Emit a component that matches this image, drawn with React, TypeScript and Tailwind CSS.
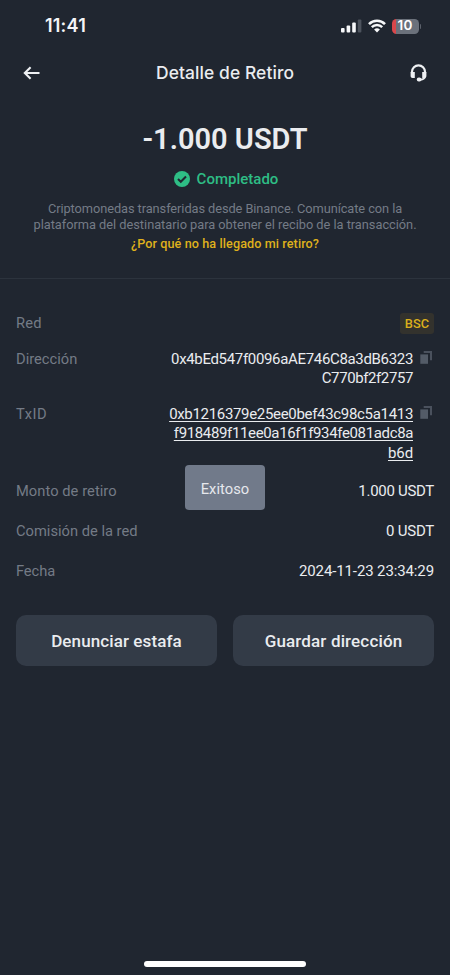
import type { ReactNode } from "react";

function StatusBar() {
  return (
    <div className="flex h-[52px] items-center justify-between pl-[45px] pr-[29px] font-['Inter',sans-serif]">
      <span className="text-[18px] font-semibold leading-5 tracking-[0.2px] text-[#f4f5f7]">11:41</span>
      <div className="flex items-center">
        <svg width="21" height="14" viewBox="0 0 21 14" className="mr-[6px]">
          <rect x="0" y="9" width="3.6" height="4.4" rx="1" fill="#f7f8fa" />
          <rect x="5.6" y="6.4" width="3.6" height="7" rx="1" fill="#f7f8fa" />
          <rect x="11.2" y="3.6" width="3.6" height="9.8" rx="1" fill="#f7f8fa" />
          <rect x="16.8" y="0.4" width="3.6" height="13" rx="1" fill="#4d535d" />
        </svg>
        <svg width="18" height="14" viewBox="0 0 18 14" className="mr-[6px]" fill="none" stroke="#f7f8fa">
          <path d="M1 5.1A11.3 11.3 0 0 1 17 5.1" strokeWidth="2.6" />
          <path d="M3.8 8.2A7.3 7.3 0 0 1 14.2 8.2" strokeWidth="2.4" />
          <path d="M9 13.5L6.1 10.6A4.1 4.1 0 0 1 11.9 10.6Z" fill="#f7f8fa" stroke="none" />
        </svg>
        <div className="flex h-[15px] w-[27px] items-center justify-center overflow-hidden rounded-[4.5px] bg-[linear-gradient(to_right,#d9474b_4px,#6b717b_4px)] text-[13.5px] font-semibold leading-none tracking-[0.2px] text-white">
          10
        </div>
        <div className="ml-px h-[5px] w-[1.5px] rounded-r-full bg-[#5b616b]" />
      </div>
    </div>
  );
}

function CopyIcon() {
  return (
    <svg width="12" height="13" viewBox="0 0 12 13" className="mt-[2px] shrink-0">
      <path d="M3.7 0H12V9.3H10V1.9H3.7Z" fill="#4a515d" />
      <rect x="0.3" y="3.4" width="7.7" height="9.4" fill="#535b67" />
    </svg>
  );
}

function Row({ label, tracking, className, children }: { label: string; tracking: string; className: string; children: ReactNode }) {
  return (
    <div className={`flex items-start justify-between ${className}`}>
      <span className={`whitespace-nowrap text-[14.7px] leading-5 text-[#747b86] ${tracking}`}>{label}</span>
      {children}
    </div>
  );
}

export default function App() {
  return (
    <div className="relative flex h-[975px] w-[450px] flex-col overflow-hidden bg-[#202630] font-['Roboto',sans-serif]">
      <StatusBar />

      <header className="flex h-[42px] items-center justify-between pl-[23px] pr-[22px]">
        <svg width="17" height="14" viewBox="0 0 17 14" fill="none" stroke="#eef0f3" strokeWidth="2.1">
          <path d="M16.5 7H2.2M7.6 1.2L1.8 7L7.6 12.8" />
        </svg>
        <h1 className="whitespace-nowrap font-['Inter',sans-serif] text-[17.4px] font-medium leading-6 tracking-[0.1px] text-[#eaecef]">
          Detalle de Retiro
        </h1>
        <svg width="18" height="18" viewBox="0 0 18 18" fill="none">
          <path d="M2 9V7.8A6.5 6.5 0 0 1 15 7.8V9" stroke="#eef0f3" strokeWidth="2.2" />
          <path d="M0.6 8H4.8V14H2.5Q0.6 14 0.6 12.2ZM12.2 8H16.4V12.2Q16.4 14 14.5 14H12.2Z" fill="#eef0f3" />
          <path d="M15 13Q14.2 15.4 10.5 15.7" stroke="#eef0f3" strokeWidth="2" />
          <rect x="6.8" y="13.6" width="4.6" height="3.8" rx="1.9" fill="#eef0f3" />
        </svg>
      </header>

      <section className="flex flex-col items-center border-b border-[#2c333d] pb-[26px] pt-[26px]">
        <div className="whitespace-nowrap text-[29px] font-semibold leading-[38px] tracking-[0px] text-[#eaecef]">-1.000 USDT</div>
        <div className="mt-[11px] flex h-5 items-center gap-[7px] pl-[2px]">
          <svg width="16" height="16" viewBox="0 0 16 16">
            <circle cx="8" cy="8" r="8" fill="#2ebd85" />
            <path d="M4 8L6.8 10.8L12 5.5" fill="none" stroke="#202630" strokeWidth="2" />
          </svg>
          <span className="text-[15px] font-medium leading-5 tracking-[0.01px] text-[#2ebd85]">Completado</span>
        </div>
        <div className="mt-[12px] flex flex-col items-center whitespace-nowrap text-[12.8px] leading-[16px] text-[#747b86]">
          <span className="tracking-[-0.07px]">Criptomonedas transferidas desde Binance. Comunícate con la</span>
          <span className="tracking-[-0.02px]">plataforma del destinatario para obtener el recibo de la transacción.</span>
        </div>
        <a className="mt-[3px] whitespace-nowrap text-[12.6px] font-medium leading-4 tracking-[0.1px] text-[#dfb11c]">¿Por qué no ha llegado mi retiro?</a>
      </section>

      <section className="flex flex-col px-4 pt-[33px] text-[15px] text-[#eaecef]">
        <Row label="Red" tracking="tracking-[0.15px]" className="h-[37px] pt-[1px]">
          <span className="flex h-[21px] w-[34px] items-center justify-center rounded-[3px] bg-[#33322d] text-[12.8px] font-medium tracking-[0.1px] text-[#dcb01c]">BSC</span>
        </Row>
        <Row label="Dirección" tracking="tracking-[0px]" className="h-[55px]">
          <div className="flex gap-[7px] pr-[2px]">
            <div className="flex flex-col items-end whitespace-nowrap pt-[1px] leading-[19.3px]">
              <span className="tracking-[-0.33px]">0x4bEd547f0096aAE746C8a3dB6323</span>
              <span className="tracking-[-0.4px]">C770bf2f2757</span>
            </div>
            <CopyIcon />
          </div>
        </Row>
        <Row label="TxID" tracking="tracking-[0.5px]" className="h-[77px]">
          <div className="flex gap-[7px] pr-[2px]">
            <div className="flex flex-col items-end whitespace-nowrap pt-[1px] leading-[19.3px] underline underline-offset-2">
              <span className="tracking-[-0.32px]">0xb1216379e25ee0bef43c98c5a1413</span>
              <span className="tracking-[-0.36px]">f918489f11ee0a16f1f934fe081adc8a</span>
              <span className="tracking-[-0.1px]">b6d</span>
            </div>
            <CopyIcon />
          </div>
        </Row>
        <Row label="Monto de retiro" tracking="tracking-[0.05px]" className="h-10">
          <span className="leading-5 tracking-[-0.3px]">1.000 USDT</span>
        </Row>
        <Row label="Comisión de la red" tracking="tracking-[0px]" className="h-10">
          <span className="leading-5 tracking-[-0.25px]">0 USDT</span>
        </Row>
        <Row label="Fecha" tracking="tracking-[-0.1px]" className="h-[54px]">
          <span className="leading-5 tracking-[-0.12px]">2024-11-23 23:34:29</span>
        </Row>
      </section>

      <div className="flex gap-4 px-4 text-[17px] font-medium text-[#eaecef]">
        <button className="h-[51px] flex-1 whitespace-nowrap rounded-[10px] bg-[#333b47] pt-[2px] tracking-[0.1px]">Denunciar estafa</button>
        <button className="h-[51px] flex-1 whitespace-nowrap rounded-[10px] bg-[#333b47] pt-[2px] tracking-[0.15px]">Guardar dirección</button>
      </div>

      <div className="mb-[8px] mt-auto h-[6px] w-[162px] self-center rounded-full bg-white" />

      <div className="absolute left-[185px] top-[465px] flex h-[45px] w-[80px] items-center justify-center rounded-[4px] bg-[#717a8a] pt-[3px] text-[14.7px] tracking-[0.05px] text-[#e6e8ed]">
        Exitoso
      </div>
    </div>
  );
}
